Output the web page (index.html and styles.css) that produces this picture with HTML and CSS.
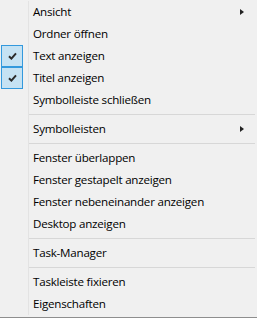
FILE: index.html
```html
<!DOCTYPE html>
<html>
<head>
<meta charset="utf-8">
<link rel="stylesheet" href="styles.css">
</head>
<body>
<div class="menu">
  <div class="item"><span class="gutter"></span><span class="label">Ansicht</span><span class="arrow"></span></div>
  <div class="item"><span class="gutter"></span><span class="label">Ordner öffnen</span></div>
  <div class="item"><span class="gutter"><span class="check"><svg width="9" height="8" viewBox="0 0 9 8"><path d="M1 4.2 L3.4 6.6 L8 1.4" fill="none" stroke="#2b2b2b" stroke-width="2"/></svg></span></span><span class="label">Text anzeigen</span></div>
  <div class="item"><span class="gutter"><span class="check"><svg width="9" height="8" viewBox="0 0 9 8"><path d="M1 4.2 L3.4 6.6 L8 1.4" fill="none" stroke="#2b2b2b" stroke-width="2"/></svg></span></span><span class="label">Titel anzeigen</span></div>
  <div class="item"><span class="gutter"></span><span class="label">Symbolleiste schließen</span></div>
  <div class="sep"><span class="gutter"></span><span class="line"></span></div>
  <div class="item"><span class="gutter"></span><span class="label">Symbolleisten</span><span class="arrow"></span></div>
  <div class="sep"><span class="gutter"></span><span class="line"></span></div>
  <div class="item"><span class="gutter"></span><span class="label">Fenster überlappen</span></div>
  <div class="item"><span class="gutter"></span><span class="label">Fenster gestapelt anzeigen</span></div>
  <div class="item"><span class="gutter"></span><span class="label">Fenster nebeneinander anzeigen</span></div>
  <div class="item"><span class="gutter"></span><span class="label">Desktop anzeigen</span></div>
  <div class="sep"><span class="gutter"></span><span class="line"></span></div>
  <div class="item"><span class="gutter"></span><span class="label">Task-Manager</span></div>
  <div class="sep"><span class="gutter"></span><span class="line"></span></div>
  <div class="item"><span class="gutter"></span><span class="label">Taskleiste fixieren</span></div>
  <div class="item"><span class="gutter"></span><span class="label">Eigenschaften</span></div>
</div>
</body>
</html>
```
FILE: styles.css
```css
html, body {
  margin: 0;
  padding: 0;
  background: #f0f0f0;
}
.menu {
  width: 257px;
  height: 318px;
  box-sizing: border-box;
  padding-top: 1px;
  background: #f0f0f0;
  border-bottom: 1px solid #8e8e8e;
  font-family: "Segoe UI", "Open Sans", sans-serif;
  font-size: 11.6px;
  letter-spacing: -0.22px;
  color: #000;
}
.item {
  display: flex;
  align-items: stretch;
  height: 22px;
  position: relative;
}
.gutter {
  width: 28px;
  flex: none;
  border-right: 1px solid #e3e3e3;
  box-sizing: content-box;
  display: flex;
  align-items: center;
}
.label {
  padding-left: 4px;
  line-height: 22px;
  flex: 1;
  white-space: nowrap;
}
.check {
  margin-left: 1px;
  width: 20px;
  height: 20px;
  background: #c5e2f3;
  border: 1px solid #3399dd;
  display: flex;
  align-items: center;
  justify-content: center;
}
.arrow {
  position: absolute;
  left: 240px;
  top: 8px;
  width: 0;
  height: 0;
  border-top: 3.5px solid transparent;
  border-bottom: 3.5px solid transparent;
  border-left: 4px solid #222;
}
.sep {
  display: flex;
  height: 7px;
}
.sep .line {
  flex: 1;
  margin: 3px 2px 0 0;
  height: 1px;
  background: #d7d7d7;
}
```
